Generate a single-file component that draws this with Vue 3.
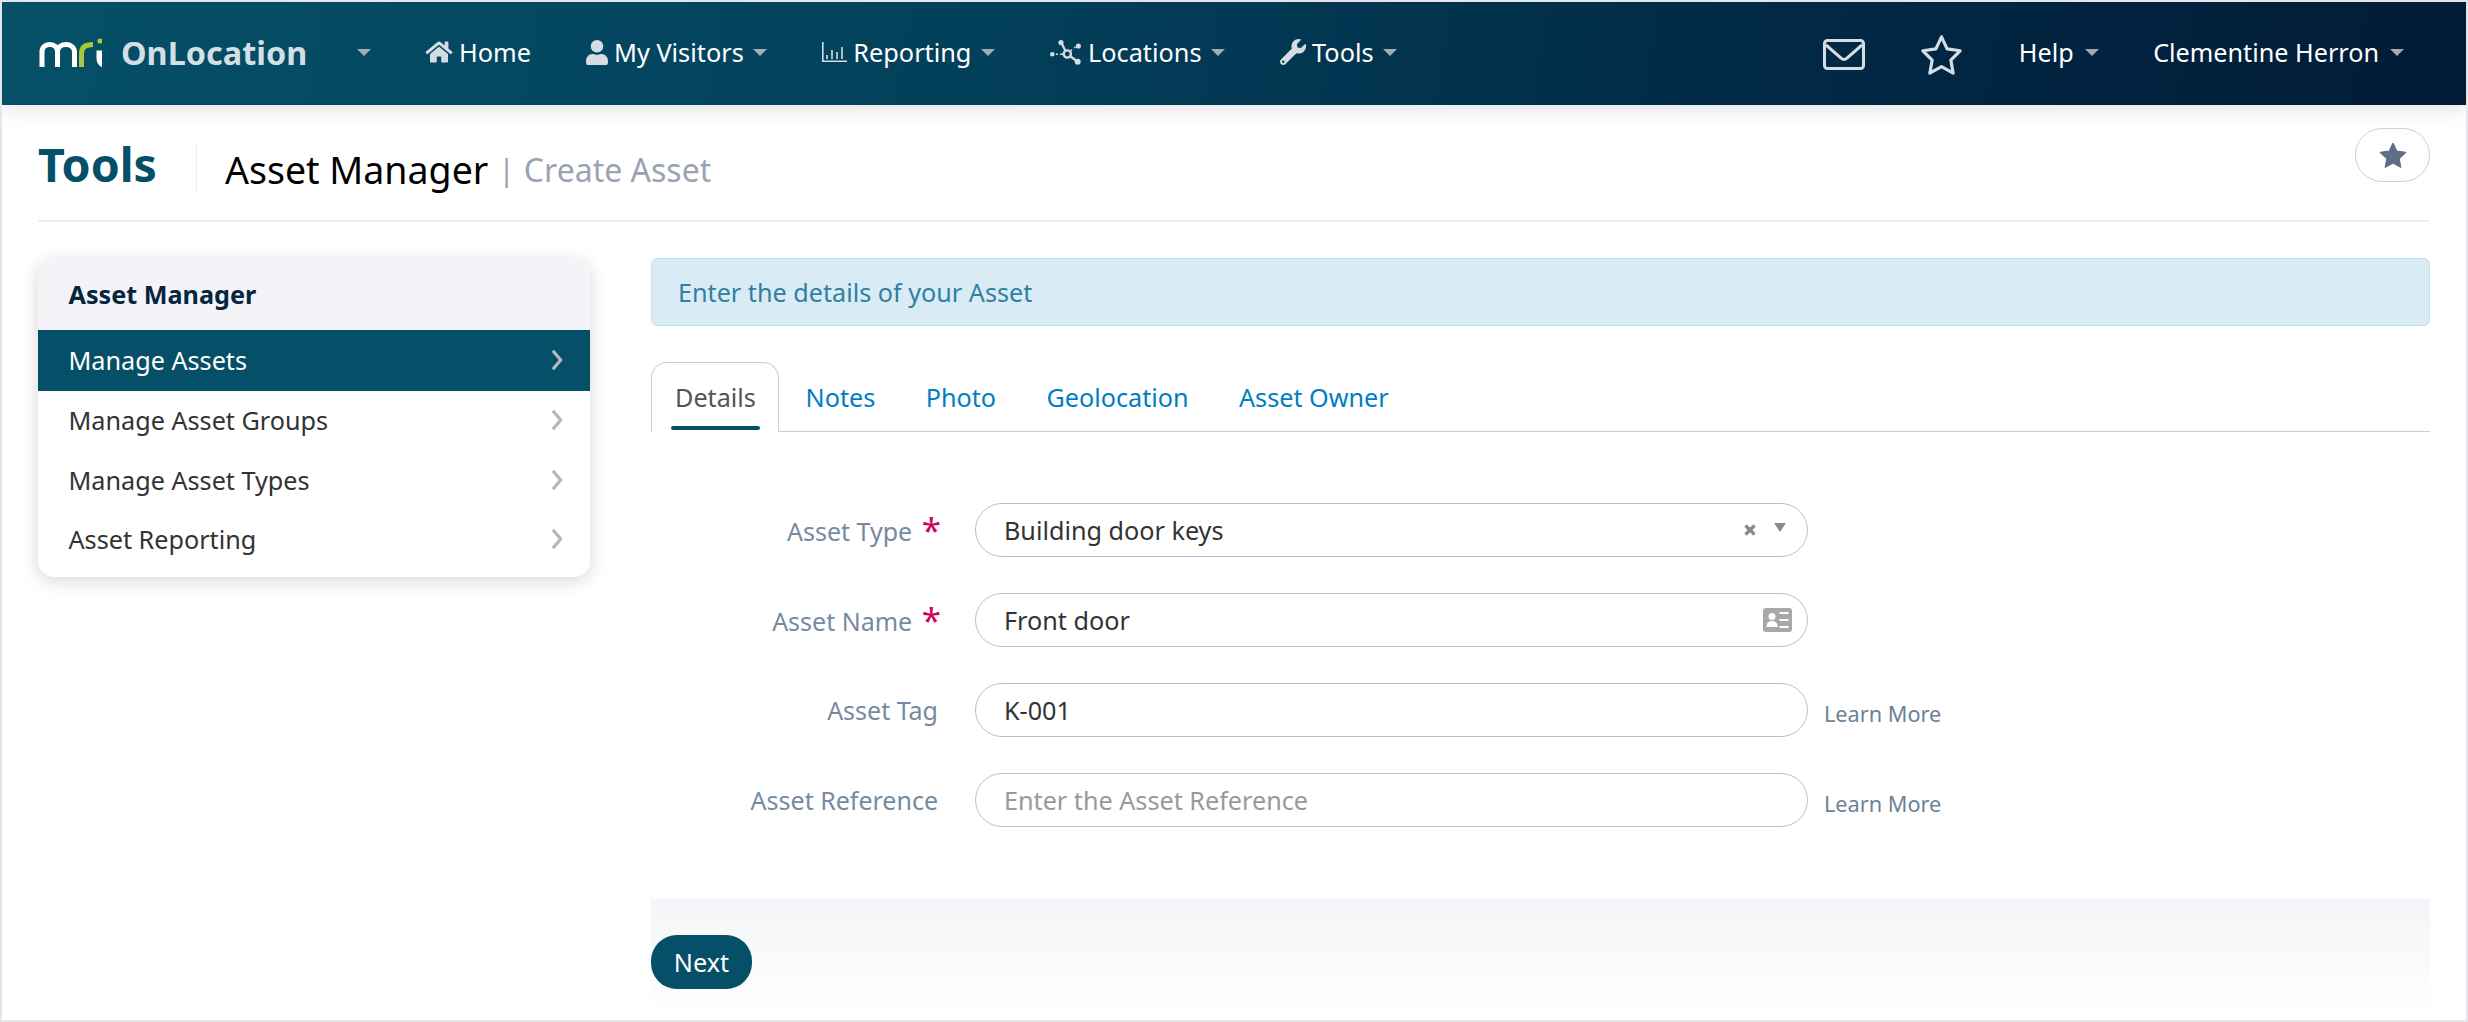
<template>
  <div class="page">
    <header class="topbar">
      <div class="brand">
        <svg class="brand-logo" viewBox="0 0 66 30" width="66" height="30">
          <path d="M6 29V14C6 8.500 10 6.500 14 6.500S21.500 9 21.500 14V29M21.500 14C21.500 8.500 26 6.500 30 6.500S38.500 9 38.500 14V29" fill="none" stroke="#fff" stroke-width="5" />
          <path d="M45.500 29V15C45.500 9 50 6.500 57 6.500" fill="none" stroke="#a8c93a" stroke-width="5" />
          <path d="M60.500 12.500H66V29C63 28 60.500 25 60.500 20z" fill="#fff" />
          <circle cx="64" cy="3" r="2.600" fill="#a8c93a" />
        </svg>
        <span class="brand-name">OnLocation</span>
        <span class="caret brand-caret"></span>
      </div>
      <nav class="nav-left">
        <a class="nav-item">
          <svg class="nav-icon" viewBox="0 0 576 512" width="28" height="24"><path d="M280 148 96 300v164c0 9 7 16 16 16l112-1c9 0 16-7 16-16v-95c0-9 7-16 16-16h64c9 0 16 7 16 16v95c0 9 7 16 16 16l112 1c9 0 16-7 16-16V300L296 148c-4-4-12-4-16 0zM571 251l-83-69V44c0-7-5-12-12-12h-56c-7 0-12 5-12 12v72l-90-74c-18-15-43-15-61 0L5 251c-5 4-6 12-2 17l26 31c4 5 12 6 17 2L280 108c4-4 12-4 16 0l234 193c5 4 13 3 17-2l26-31c4-5 3-13-2-17z" fill="currentColor" /></svg>
          Home
        </a>
        <a class="nav-item">
          <svg class="nav-icon" viewBox="0 0 448 512" width="22" height="25"><path d="M224 256a128 128 0 1 0 0-256 128 128 0 0 0 0 256zm90 32h-17a174 174 0 0 1-146 0h-17C60 288 0 348 0 422v42c0 27 21 48 48 48h352c27 0 48-21 48-48v-42c0-74-60-134-134-134z" fill="currentColor" /></svg>
          My Visitors
          <span class="caret"></span>
        </a>
        <a class="nav-item">
          <svg class="nav-icon" viewBox="0 0 25 20" width="25" height="20"><path d="M.8 0v19.200H25M5 17v-4M10 17V8M15 17v-7M20 17V5" fill="none" stroke="currentColor" stroke-width="1.600" /></svg>
          Reporting
          <span class="caret"></span>
        </a>
        <a class="nav-item">
          <svg class="nav-icon" viewBox="0 0 32 25" width="32" height="25">
            <g fill="currentColor">
              <circle cx="2.300" cy="14.300" r="2.300" />
              <circle cx="11" cy="2.600" r="2.600" />
              <circle cx="28.300" cy="6" r="2.600" />
              <circle cx="27.700" cy="21.700" r="3" />
            </g>
            <circle cx="17.300" cy="14" r="3.600" fill="none" stroke="currentColor" stroke-width="2.400" />
            <path d="M12 4l3.500 7M20 16l6 4.500" fill="none" stroke="currentColor" stroke-width="2.200" />
            <path d="M6 14.200h2M10 14.200h3M20.500 11l1.500-1.500M24 8l1.500-1" fill="none" stroke="currentColor" stroke-width="1.400" />
          </svg>
          Locations
          <span class="caret"></span>
        </a>
        <a class="nav-item">
          <svg class="nav-icon" viewBox="0 0 512 512" width="26" height="26"><path d="M507 109c-2-9-13-12-20-5l-74 74-68-11-11-68 74-74c7-7 4-18-5-20-47-12-99 0-136 37-39 39-50 96-34 146L19 402c-25 25-25 66 0 91s66 25 91 0l213-213c50 16 107 5 147-35 37-37 49-89 37-136zM64 472a24 24 0 1 1 0-48 24 24 0 0 1 0 48z" fill="currentColor" /></svg>
          Tools
          <span class="caret"></span>
        </a>
      </nav>
      <div class="nav-right">
        <svg class="mail-icon" viewBox="0 0 42 31" width="42" height="31"><rect x="1.500" y="1.500" width="39" height="28" rx="3" fill="none" stroke="currentColor" stroke-width="3" /><path d="M3 6l15 13c2 2 4 2 6 0L39 6" fill="none" stroke="currentColor" stroke-width="3" /></svg>
        <svg class="star-icon" viewBox="0 0 46 44" width="43" height="41"><path d="M23 3l6 13 14 2-10 10 2.500 14L23 35l-12.500 7L13 28 3 18l14-2z" fill="none" stroke="currentColor" stroke-width="3.400" stroke-linejoin="round" /></svg>
        <a class="nav-item nav-help">Help <span class="caret"></span></a>
        <a class="nav-item nav-user">Clementine Herron <span class="caret"></span></a>
      </div>
    </header>

    <div class="title-row">
      <h1 class="section-title">Tools</h1>
      <div class="page-title">
        <span class="page-name">Asset Manager</span>
        <span class="page-sep">|</span>
        <span class="page-sub">Create Asset</span>
      </div>
      <button class="fav-btn">
        <svg viewBox="0 0 30 28" width="28" height="26"><path d="M15 1.500l4 8.500 9.500 1.300-7 6.500 1.800 9.200-8.300-4.600-8.300 4.600 1.800-9.200-7-6.500L11 10z" fill="#5f6f88" stroke="#5f6f88" stroke-width="1.500" stroke-linejoin="round" /></svg>
      </button>
    </div>

    <div class="content">
      <aside class="side-card">
        <div class="side-head">Asset Manager</div>
        <a v-for="item in sideItems" :key="item" class="side-item" :class="{ active: item === 'Manage Assets' }">
          {{ item }}
          <svg viewBox="0 0 13 24" width="12" height="22"><path d="M2 2l8.500 10L2 22" fill="none" stroke="#b5b8bb" stroke-width="3.500" /></svg>
        </a>
      </aside>

      <main class="main">
        <div class="alert">Enter the details of your Asset</div>

        <div class="tabs">
          <a v-for="t in tabs" :key="t" class="tab" :class="{ active: t === 'Details' }">{{ t }}</a>
        </div>

        <form class="form">
          <div class="field">
            <label class="label">Asset Type <i>*</i></label>
            <div class="input">
              <span>Building door keys</span>
              <svg class="clear-icon" viewBox="0 0 14 14" width="14" height="14"><path d="M2.500 2.500l9 9M11.500 2.500l-9 9" stroke="#8a8a8a" stroke-width="3.200" /></svg>
              <span class="select-arrow"></span>
            </div>
          </div>
          <div class="field">
            <label class="label">Asset Name <i>*</i></label>
            <div class="input">
              <span>Front door</span>
              <svg class="card-icon" viewBox="0 0 29 24" width="29" height="24">
                <rect width="29" height="24" rx="3" fill="#a8a8a8" />
                <circle cx="9" cy="8.500" r="3.500" fill="#fff" />
                <path d="M3.500 19c0-4 2-6 5.500-6s5.500 2 5.500 6z" fill="#fff" />
                <path d="M16.500 5h9M16.500 12h9M16.500 19h9" stroke="#fff" stroke-width="2.200" />
              </svg>
            </div>
          </div>
          <div class="field">
            <label class="label">Asset Tag</label>
            <div class="input"><span>K-001</span></div>
            <a class="learn">Learn More</a>
          </div>
          <div class="field">
            <label class="label">Asset Reference</label>
            <div class="input"><span class="placeholder">Enter the Asset Reference</span></div>
            <a class="learn">Learn More</a>
          </div>
        </form>

        <div class="footer">
          <button type="button" class="next-btn">Next</button>
        </div>
      </main>
    </div>
  </div>
</template>

<script setup>
const sideItems = ["Manage Assets", "Manage Asset Groups", "Manage Asset Types", "Asset Reporting"]
const tabs = ["Details", "Notes", "Photo", "Geolocation", "Asset Owner"]
</script>

<style>
html,
body {
  margin: 0;
  background: #fff;
}
</style>

<style scoped>
.page {
  box-sizing: border-box;
  width: 2468px;
  height: 1022px;
  border: 2px solid #e4e6e9;
  overflow: hidden;
  font-family: "Noto Sans", "Open Sans", sans-serif;
  font-size: 25.200px;
  color: #333;
  background: #fff;
}

.topbar {
  box-sizing: border-box;
  display: flex;
  align-items: center;
  height: 103px;
  padding-bottom: 3px;
  background: linear-gradient(100deg, #055068 0%, #03405a 40%, #012a47 70%, #011b37 100%);
  box-shadow: 0 4px 20px rgba(0, 0, 0, 0.12);
  color: #fff;
  position: relative;
}

.brand {
  display: flex;
  align-items: center;
  padding-left: 34px;
  width: 388px;
  flex: none;
  box-sizing: border-box;
}

.brand-logo {
  flex: none;
  margin-top: 2px;
}

.brand-name {
  margin-left: 19px;
  font-size: 32.400px;
  font-weight: 700;
  color: #d4dee5;
}

.caret {
  display: inline-block;
  width: 0;
  height: 0;
  border-left: 7px solid transparent;
  border-right: 7px solid transparent;
  border-top: 7px solid #a3abb3;
  margin-left: 11px;
  vertical-align: middle;
}

.brand-caret {
  margin-left: 50px;
}

.nav-left {
  display: flex;
  align-items: center;
  font-size: 25.300px;
}

.nav-left .caret {
  margin-left: 9.500px;
}

.nav-item {
  display: flex;
  align-items: center;
  color: #fff;
  white-space: nowrap;
}

.nav-icon {
  color: #d6dde2;
  margin-right: 6px;
  flex: none;
}

.nav-left .nav-item {
  margin-left: 55px;
}

.nav-left .nav-item:first-child {
  margin-left: 35px;
}

.nav-right {
  margin-left: auto;
  display: flex;
  align-items: center;
  padding-right: 62px;
}

.mail-icon,
.star-icon {
  color: #d6dde2;
  flex: none;
  margin-top: 5px;
}

.star-icon {
  margin-left: 55px;
}

.nav-right .nav-help {
  margin-left: 56px;
}

.nav-right .nav-user {
  margin-left: 54.500px;
}

.title-row {
  display: flex;
  align-items: center;
  margin: 0 36px;
  height: 115px;
  border-bottom: 2px solid #eef0f2;
}

.section-title {
  margin: 3px 0 0;
  font-size: 46.500px;
  font-weight: 700;
  color: #054f68;
  width: 158px;
  flex: none;
  line-height: 52px;
}

.page-title {
  border-left: 1px solid #eef0f2;
  height: 51px;
  display: flex;
  align-items: center;
  padding: 3px 0 0 28px;
  box-sizing: border-box;
  margin-top: 10px;
}

.page-name {
  font-size: 37.500px;
  color: #000;
}

.page-sep {
  font-size: 30px;
  color: #9aa3b2;
  margin-left: 10px;
}

.page-sub {
  font-size: 32px;
  color: #9aa3b2;
  margin-left: 9px;
}

.fav-btn {
  margin-left: auto;
  align-self: flex-start;
  margin-top: 23px;
  width: 75px;
  height: 54px;
  border: 1px solid #c5d3da;
  border-radius: 27px;
  background: #fff;
  display: flex;
  align-items: center;
  justify-content: center;
  padding: 0;
}

.content {
  display: flex;
  gap: 61px;
  padding: 36px 36px 0;
}

.side-card {
  width: 552px;
  height: 319px;
  flex: none;
  border-radius: 16px;
  overflow: hidden;
  box-shadow: 0 4px 18px rgba(0, 0, 0, 0.16);
  background: #fff;
}

.side-head {
  height: 72px;
  display: flex;
  align-items: center;
  padding-left: 30.500px;
  background: #f4f4f8;
  font-weight: 700;
  color: #04263f;
}

.side-item {
  box-sizing: border-box;
  display: flex;
  align-items: center;
  justify-content: space-between;
  height: 59.500px;
  padding: 0 27px 1px 30.500px;
  color: #333;
}

.side-item.active {
  background: #054f68;
  color: #fff;
  height: 61px;
}

.main {
  flex: 1;
  min-width: 0;
}

.alert {
  box-sizing: border-box;
  height: 68px;
  display: flex;
  align-items: center;
  padding-left: 26px;
  background: #d9ecf6;
  border: 1px solid #bfe6ee;
  border-radius: 6px;
  color: #31809f;
}

.tabs {
  display: flex;
  height: 69px;
  margin-top: 36px;
  border-bottom: 1px solid #c4d0d8;
}

.tab {
  position: relative;
  padding: 18px 25.200px 0;
  color: #007dc3;
}

.tab.active {
  box-sizing: border-box;
  height: 70px;
  border: 1px solid #c4d0d8;
  border-bottom: 1px solid #fff;
  border-radius: 16px 16px 0 0;
  color: #555;
  padding: 17px 22px 0 23px;
  margin-right: 1.500px;
}

.tab.active::after {
  content: "";
  position: absolute;
  left: 19px;
  right: 18px;
  bottom: 1px;
  height: 4px;
  border-radius: 2px;
  background: #054f68;
}

.form {
  padding-top: 71px;
  height: 467px;
  box-sizing: border-box;
}

.field {
  display: flex;
  align-items: center;
  height: 54px;
  margin-bottom: 36px;
}

.label {
  width: 287px;
  flex: none;
  text-align: right;
  color: #768aa0;
  font-size: 25px;
}

.label i {
  color: #d0005c;
  font-style: normal;
  font-size: 35px;
  line-height: 1;
  margin: 0 -3px 0 3px;
  vertical-align: -2px;
}

.input {
  box-sizing: border-box;
  display: flex;
  align-items: center;
  width: 833px;
  height: 54px;
  margin-left: 37px;
  padding: 0 15px 0 28px;
  border: 1px solid #b2c2d6;
  border-radius: 27px;
  color: #333;
  flex: none;
}

.input > span:first-child {
  flex: 1;
}

.placeholder {
  color: #999;
}

.clear-icon {
  margin-bottom: 1px;
}

.select-arrow {
  width: 0;
  height: 0;
  border-left: 6px solid transparent;
  border-right: 6px solid transparent;
  border-top: 9px solid #8a8a8a;
  margin: 0 6px 6px 17px;
}

.learn {
  margin-left: 16px;
  margin-top: 7px;
  font-size: 21.700px;
  color: #6b8299;
}

.footer {
  height: 121px;
  box-sizing: border-box;
  padding-top: 36px;
  background: linear-gradient(180deg, #f4f5f8 0%, #ffffff 100%);
}

.next-btn {
  display: block;
  width: 101px;
  height: 54px;
  border: none;
  border-radius: 26px;
  background: #054f68;
  color: #fff;
  font-family: inherit;
  font-size: 25.200px;
  padding: 0;
}
</style>
